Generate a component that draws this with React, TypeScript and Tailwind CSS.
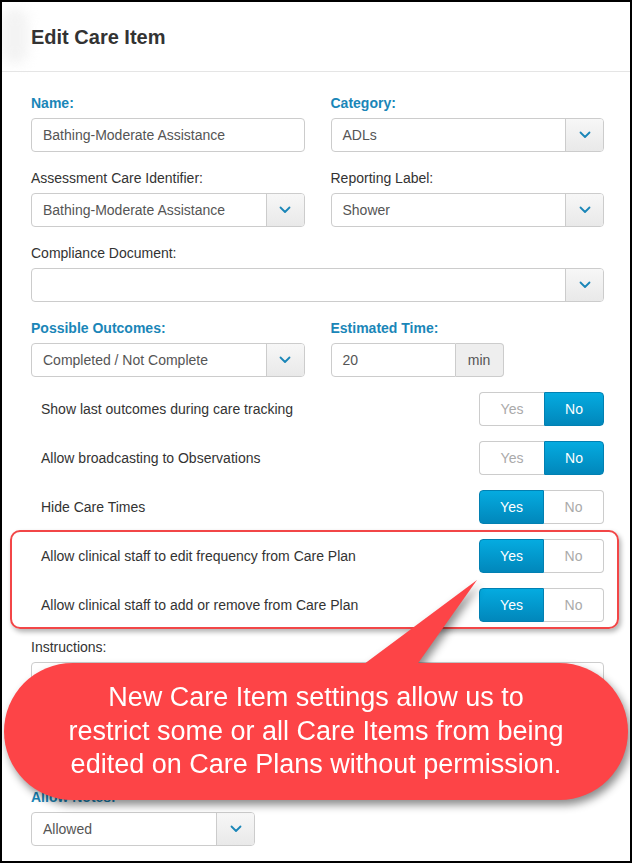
import React from "react";

function Chevron() {
  return (
    <svg width="12" height="8" viewBox="0 0 12 8" fill="none">
      <polyline points="1.5,1.5 6,6 10.5,1.5" stroke="#1a86b8" strokeWidth="1.8" strokeLinecap="round" strokeLinejoin="round" />
    </svg>
  );
}

function Label({ text, blue }: { text: string; blue?: boolean }) {
  return (
    <div className={`mb-[5px] leading-5 ${blue ? "font-bold text-[#1a86b8]" : "text-[#333]"}`}>
      {text}
    </div>
  );
}

function TextBox({ value }: { value: string }) {
  return (
    <div className="flex h-[34px] items-center rounded-[4px] border border-[#ccc] bg-white px-[11px] text-[#555]">
      {value}
    </div>
  );
}

function Select({ value, className = "" }: { value: string; className?: string }) {
  return (
    <div className={`flex h-[34px] overflow-hidden rounded-[4px] border border-[#ccc] bg-white ${className}`}>
      <div className="flex flex-1 items-center px-[11px] text-[#555]">{value}</div>
      <div className="flex w-[38px] items-center justify-center border-l border-[#ccc] bg-gradient-to-b from-[#f7f7f7] to-[#e9e9e9]">
        <Chevron />
      </div>
    </div>
  );
}

function Toggle({ yes }: { yes: boolean }) {
  const on = "bg-gradient-to-b from-[#05abe0] to-[#0187bb] text-white border border-[#0180b2]";
  const off = "bg-white text-[#aaa] border border-[#ccc]";
  return (
    <div className="flex h-[34px]">
      <div className={`flex w-[65px] items-center justify-center rounded-l-[4px] ${yes ? on : off + " border-r-0"}`}>
        Yes
      </div>
      <div className={`flex w-[60px] items-center justify-center rounded-r-[4px] ${yes ? off + " border-l-0" : on}`}>
        No
      </div>
    </div>
  );
}

function ToggleRow({ text, yes }: { text: string; yes: boolean }) {
  return (
    <div className="flex h-[34px] items-center justify-between pl-[10px]">
      <span className="text-[#333]">{text}</span>
      <Toggle yes={yes} />
    </div>
  );
}

export default function App() {
  return (
    <div className="relative h-[863px] w-[632px] overflow-hidden border-2 border-black bg-white font-['Liberation_Sans',Arial,sans-serif] text-[14px] text-[#333]">
      <div className="pointer-events-none absolute left-0 top-[6px] h-[56px] w-[26px] rounded-full bg-[#eee] opacity-70 blur-[6px]" />

      <div className="relative flex h-[70px] items-center border-b border-[#e5e5e5] pl-[29px]">
        <h1 className="text-[20px] font-bold text-[#333]">Edit Care Item</h1>
      </div>

      <div className="pl-[29px] pr-[26px] pt-[21px]">
        <div className="grid grid-cols-2 gap-x-[26px] gap-y-4">
          <div>
            <Label text="Name:" blue />
            <TextBox value="Bathing-Moderate Assistance" />
          </div>
          <div>
            <Label text="Category:" blue />
            <Select value="ADLs" />
          </div>
          <div>
            <Label text="Assessment Care Identifier:" />
            <Select value="Bathing-Moderate Assistance" />
          </div>
          <div>
            <Label text="Reporting Label:" />
            <Select value="Shower" />
          </div>
          <div className="col-span-2">
            <Label text="Compliance Document:" />
            <Select value="" />
          </div>
          <div>
            <Label text="Possible Outcomes:" blue />
            <Select value="Completed / Not Complete" />
          </div>
          <div>
            <Label text="Estimated Time:" blue />
            <div className="flex h-[34px]">
              <div className="flex w-[125px] items-center rounded-l-[4px] border border-[#ccc] px-[11px] text-[#555]">20</div>
              <div className="flex w-[48px] items-center justify-center rounded-r-[4px] border border-l-0 border-[#ccc] bg-[#eee] text-[#555]">
                min
              </div>
            </div>
          </div>
        </div>

        <div className="mt-[15px] flex flex-col gap-[15px]">
          <ToggleRow text="Show last outcomes during care tracking" yes={false} />
          <ToggleRow text="Allow broadcasting to Observations" yes={false} />
          <ToggleRow text="Hide Care Times" yes={true} />
          <div className="relative flex flex-col gap-[15px]">
            <div className="pointer-events-none absolute -bottom-[7px] -left-[21px] -right-[15px] -top-[9px] rounded-[10px] border-[2.5px] border-[#f24647] shadow-[2px_3px_5px_rgba(0,0,0,0.3)]" />
            <ToggleRow text="Allow clinical staff to edit frequency from Care Plan" yes={true} />
            <ToggleRow text="Allow clinical staff to add or remove from Care Plan" yes={true} />
          </div>
        </div>

        <div className="mt-[15px]">
          <Label text="Instructions:" />
          <div className="h-[110px] rounded-[4px] border border-[#ccc] bg-white" />
        </div>

        <div className="mt-[15px]">
          <Label text="Allow Notes:" blue />
          <Select value="Allowed" className="w-[224px]" />
        </div>
      </div>

      <div className="absolute left-[2px] top-[576px] h-[222px] w-[624px] drop-shadow-[3px_5px_4px_rgba(0,0,0,0.45)]">
        <svg className="absolute left-0 top-0" width="624" height="100" viewBox="0 0 624 100">
          <polygon points="473,2 344,98 405,98" fill="#fd4447" />
        </svg>
        <div className="absolute bottom-0 left-0 flex h-[137px] w-[624px] items-center justify-center rounded-full bg-[#fd4447]">
          <p className="text-center text-[27px] leading-[33.5px] text-white">
            New Care Item settings allow us to
            <br />
            restrict some or all Care Items from being
            <br />
            edited on Care Plans without permission.
          </p>
        </div>
      </div>
    </div>
  );
}
